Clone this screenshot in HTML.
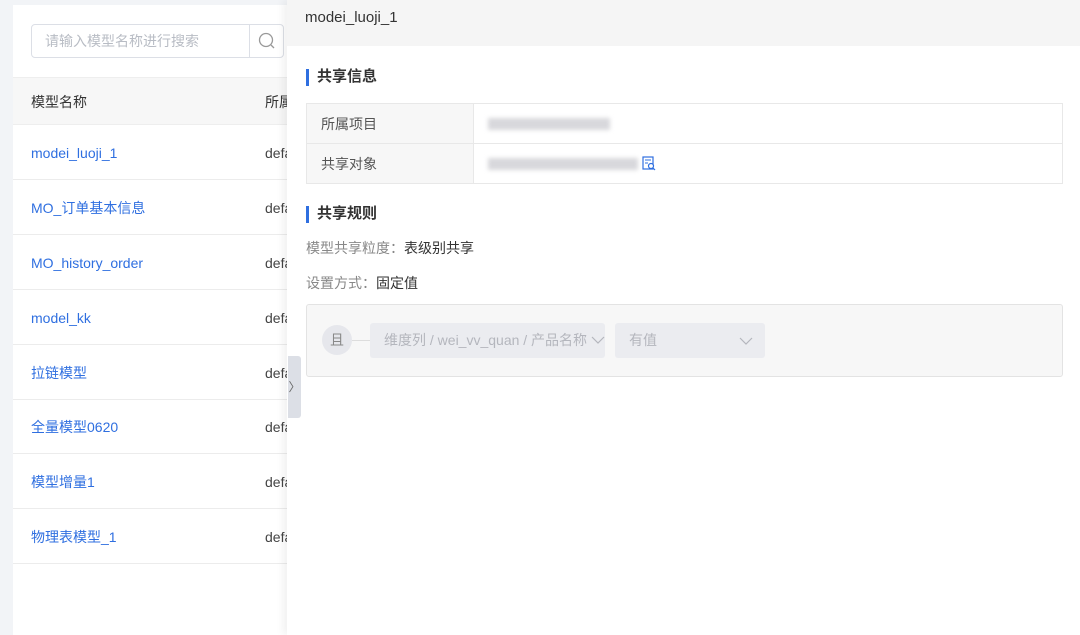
<!DOCTYPE html><html><head><meta charset="utf-8"><style>
*{box-sizing:border-box;margin:0;padding:0}
body{width:1080px;height:635px;overflow:hidden;background:#f2f4f7;font-family:"Liberation Sans","Noto Sans CJK SC",sans-serif;font-size:14px;line-height:20px;color:#333;position:relative}
.left{position:absolute;left:13px;top:5px;width:290px;height:630px;background:#fff}
.search{position:absolute;left:18px;top:19px;width:253px;height:34px;border:1px solid #dcdfe6;border-radius:4px;color:#b8bcc4;font-size:14px;line-height:32px;padding-left:13px}
.search .btn{position:absolute;right:0;top:0;width:34px;height:32px;border-left:1px solid #dcdfe6}
.th{position:absolute;left:0;top:72px;width:290px;height:48px;background:#f7f7f7;border-top:1px solid #eee;border-bottom:1px solid #eee}
.th span{position:absolute;top:14px;font-size:14px;color:#333}
.row{position:absolute;left:0;width:290px;height:55px;border-bottom:1px solid #ececec}
.row a{position:absolute;left:18px;top:18px;color:#2f6fe0;font-size:14px;line-height:20px}
.row b{position:absolute;left:252px;top:18px;font-weight:normal;color:#444;line-height:20px}
.drawer{position:absolute;left:287px;top:0;width:793px;height:635px;background:#fff;box-shadow:-4px 0 8px rgba(0,0,0,.06)}
.hd{height:46px;background:#f5f5f5;font-size:15px;line-height:36px;padding-left:18px;color:#333}
.tt{position:absolute;left:19px;font-size:15px;font-weight:bold;color:#333;padding-left:11px}
.tt:before{content:"";position:absolute;left:0;top:2px;width:3px;height:17px;background:#2f6fe0}
table{position:absolute;left:19px;top:103px;width:757px;border-collapse:collapse}
td{border:1px solid #e8e8e8;height:40px;padding-left:14px;color:#555}
td.l{background:#f7f7f7;width:167px}
.blur{display:inline-block;height:12px;background:#d8d8dc;filter:blur(2px);vertical-align:-1px}
.kv{position:absolute;left:19px;color:#888}
.kv span{color:#333}
.box{position:absolute;left:19px;top:304px;width:757px;height:73px;border:1px solid #e3e3e3;border-radius:3px;background:#f7f7f7}
.c{position:absolute;left:15px;top:20px;width:30px;height:30px;border-radius:50%;background:#e6e7ec;color:#888;text-align:center;line-height:30px}
.ln{position:absolute;left:45px;top:35px;width:18px;height:1px;background:#ddd}
.sel{position:absolute;top:18px;height:35px;background:#ebecf0;border-radius:3px;color:#b4b6bd;line-height:35px;padding-left:14px}
.tab{position:absolute;left:288px;top:356px;width:13px;height:62px;background:#dcdfe6;border-radius:0 3px 3px 0;color:#666;font-size:12px;line-height:62px;text-align:center}
</style></head><body>
<div class="left">
<div class="search">请输入模型名称进行搜索<div class="btn"><svg width="34" height="32"><circle cx="16" cy="15" r="6.5" fill="none" stroke="#999" stroke-width="1.3"/><path d="M21 20l3 3" stroke="#999" stroke-width="1.3"/></svg></div></div>
<div class="th"><span style="left:18px">模型名称</span><span style="left:252px">所属</span></div>
<div class="row" style="top:120px"><a>modei_luoji_1</a><b>defa</b></div>
<div class="row" style="top:175px"><a>MO_订单基本信息</a><b>defa</b></div>
<div class="row" style="top:230px"><a>MO_history_order</a><b>defa</b></div>
<div class="row" style="top:285px"><a>model_kk</a><b>defa</b></div>
<div class="row" style="top:340px"><a>拉链模型</a><b>defa</b></div>
<div class="row" style="top:394px"><a>全量模型0620</a><b>defa</b></div>
<div class="row" style="top:449px"><a>模型增量1</a><b>defa</b></div>
<div class="row" style="top:504px"><a>物理表模型_1</a><b>defa</b></div>
</div>
<div class="drawer">
<div class="hd">modei_luoji_1</div>
<div class="tt" style="top:67px">共享信息</div>
<table><tr><td class="l">所属项目</td><td><span class="blur" style="width:122px"></span></td></tr>
<tr><td class="l">共享对象</td><td><span class="blur" style="width:150px"></span> <svg width="14" height="15" style="vertical-align:-2px"><rect x="1" y="1" width="10" height="12" fill="none" stroke="#2f6fe0" stroke-width="1.2"/><path d="M3 4h6M3 7h3" stroke="#2f6fe0"/><circle cx="9" cy="10" r="2.5" fill="#fff" stroke="#2f6fe0" stroke-width="1.2"/><path d="M11 12l2 2" stroke="#2f6fe0" stroke-width="1.2"/></svg></td></tr></table>
<div class="tt" style="top:204px">共享规则</div>
<div class="kv" style="top:238px">模型共享粒度：<span>表级别共享</span></div>
<div class="kv" style="top:273px">设置方式：<span>固定值</span></div>
<div class="box"><div class="c">且</div><div class="ln"></div>
<div class="sel" style="left:63px;width:235px">维度列 / wei_vv_quan / 产品名称 <svg width="14" height="10"><path d="M1 2l6 6 6-6" fill="none" stroke="#b4b6bd" stroke-width="1.2"/></svg></div>
<div class="sel" style="left:308px;width:150px">有值<svg width="14" height="10" style="position:absolute;right:12px;top:13px"><path d="M1 2l6 6 6-6" fill="none" stroke="#b4b6bd" stroke-width="1.2"/></svg></div></div>
</div>
<div class="tab">〉</div>
</body></html>
